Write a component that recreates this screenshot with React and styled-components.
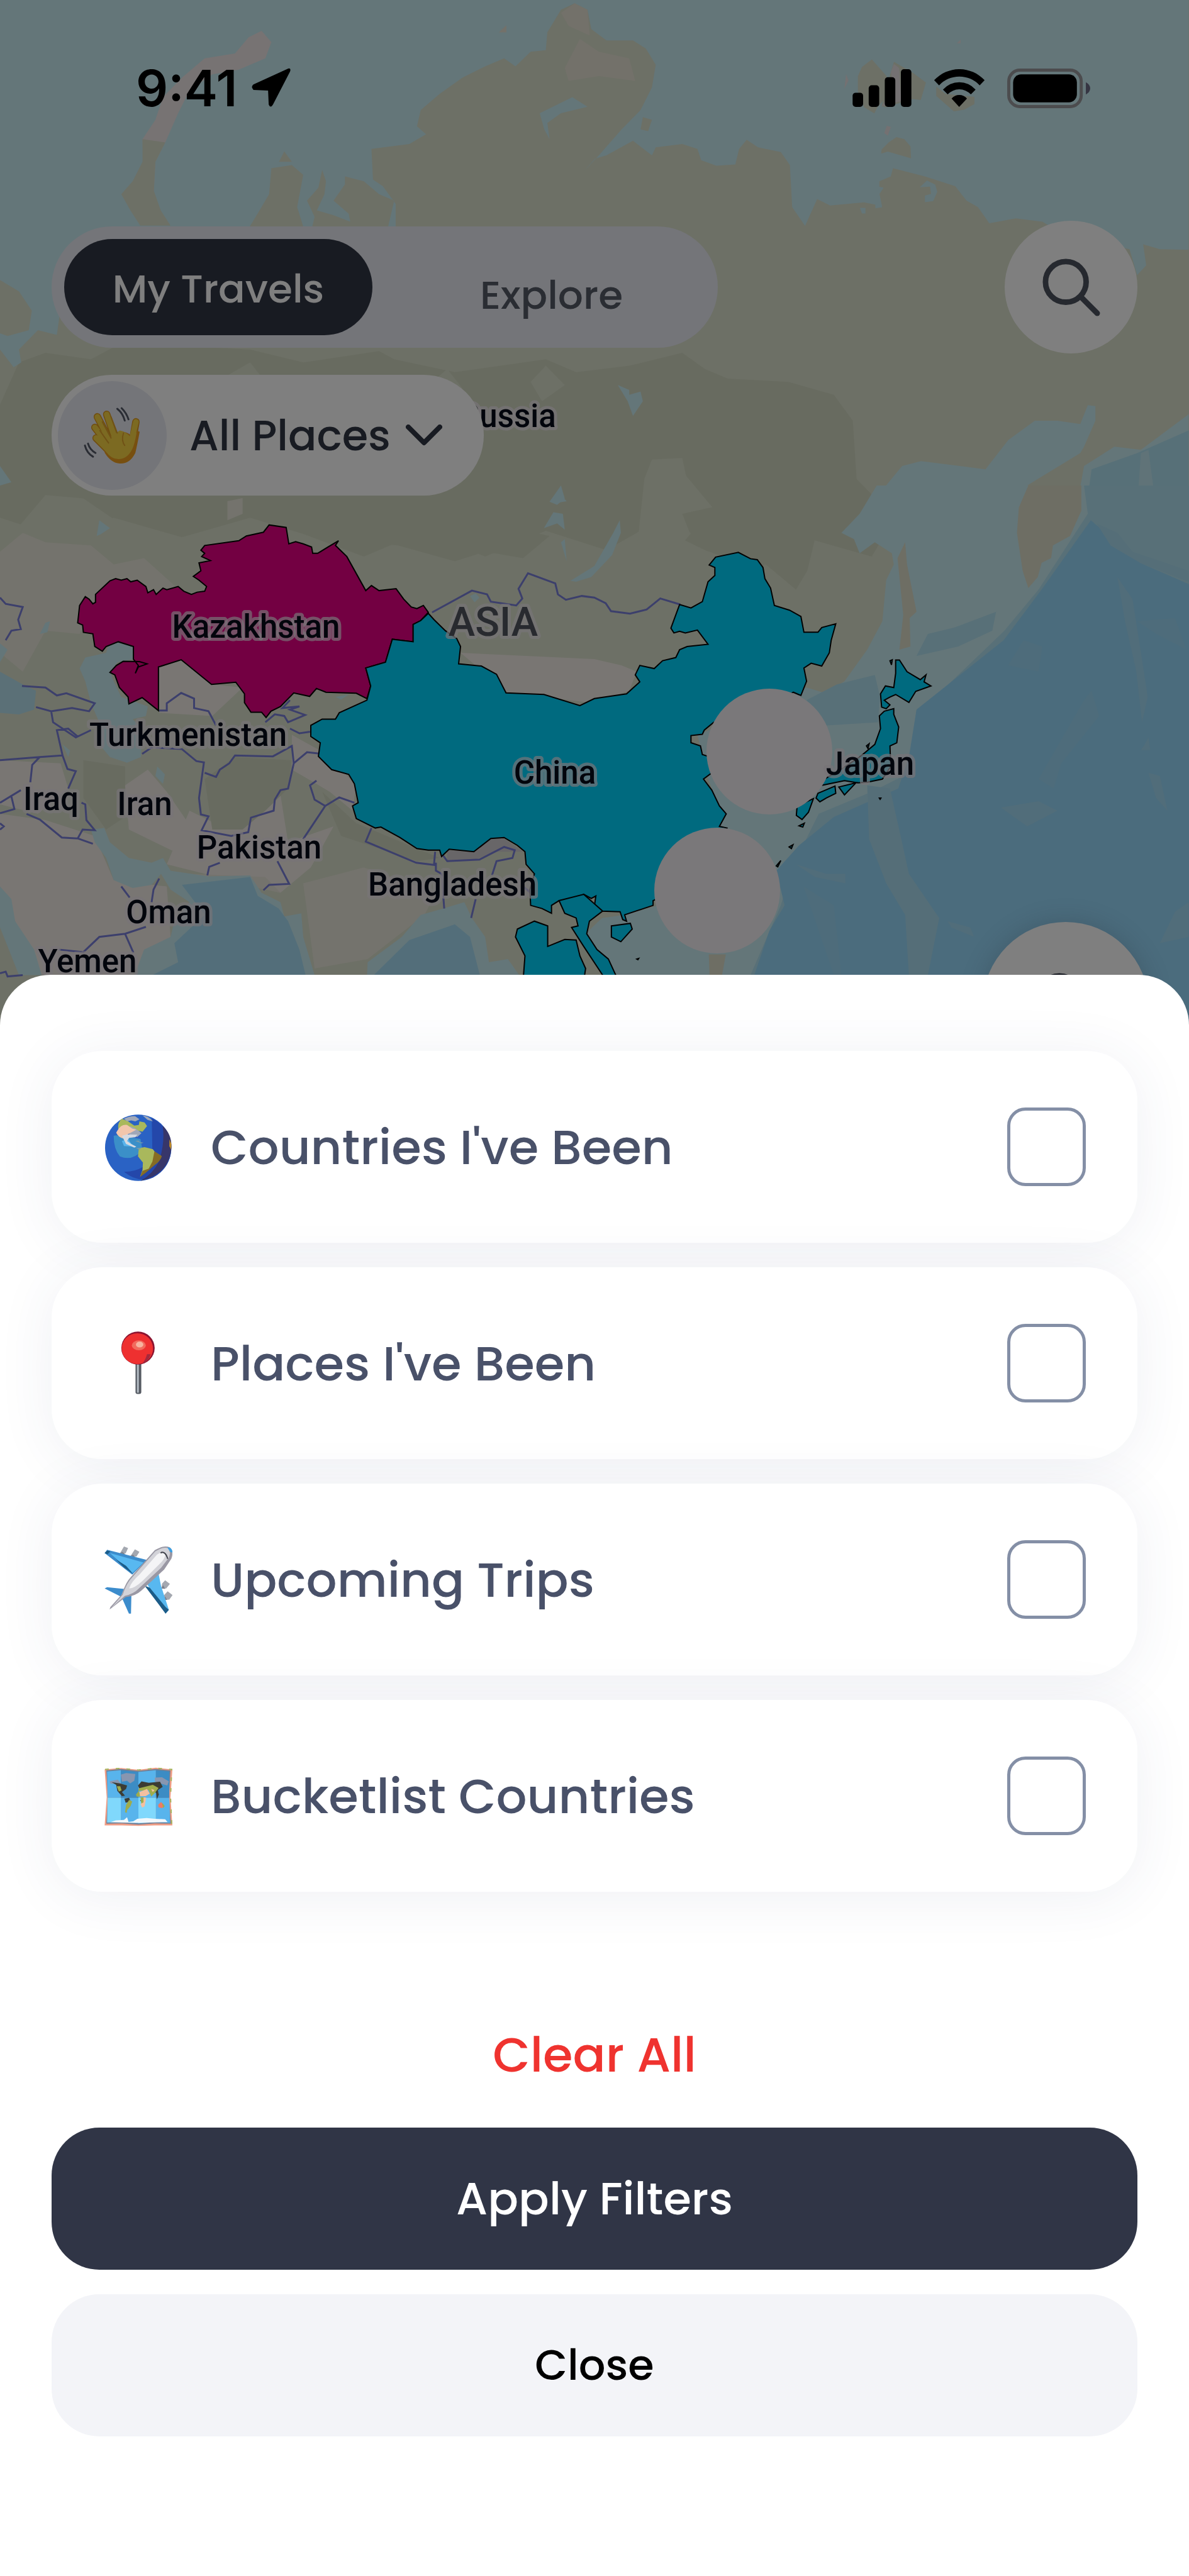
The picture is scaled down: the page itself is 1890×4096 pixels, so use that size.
import React, { useState } from 'react';
import styled, { createGlobalStyle } from 'styled-components';


const labels = [
    { text: 'Russia', x: 807, y: 679 },
    { text: 'Kazakhstan', x: 407, y: 1014 },
    { text: 'Turkmenistan', x: 299, y: 1186 },
    { text: 'Iraq', x: 81, y: 1288 },
    { text: 'Iran', x: 230, y: 1296 },
    { text: 'Pakistan', x: 412, y: 1365 },
    { text: 'Bangladesh', x: 719, y: 1424 },
    { text: 'Oman', x: 268, y: 1468 },
    { text: 'Yemen', x: 139, y: 1546 },
    { text: 'China', x: 882, y: 1246 },
    { text: 'Japan', x: 1383, y: 1232 },
];

const WorldMap = () => (
    <MapSvg viewBox="0 0 1890 1700" aria-hidden="true">
        <rect width="1890" height="1700" fill="#dae0cc"/>
        {/* arctic coast */}
        <g transform="scale(1.205 .5146)">
            <path fill="#d1d7c1" d="M0 1250L25 1120 60 1090 120 1110 160 1060 330 1080 400 1120 500 1085 520 1110 600 1150 660 1130 720 1110 760 1150 830 1130 900 1090 930 1140 960 1170 1040 1180 1100 1220 1125 1300 1130 1480 1180 1600 1150 1720 1060 1660 1000 1760 930 1700 860 1620 800 1700 720 1640 640 1720 560 1640 480 1720 400 1650 330 1600 240 1660 150 1600 80 1660 0 1600z"/>
            <path fill="#dae0cc" d="M840 1700L850 1480 860 1420 900 1415 905 1470 940 1568 900 1680zM20 1640L60 1530 110 1540 160 1620 90 1700zM300 1160L330 1120 350 1180 320 1250zM560 1200L590 1140 610 1200 580 1280zM700 1180L720 1130 745 1190 715 1240z"/>
            <path fill="#c8ecf2" d="M0 0L0 865 25 900 42 960 38 1020 10 1038 0 1030 0 1080 18 1135 28 1120 25 1080 50 1020 75 1035 80 950 200 900 300 800 330 698 345 640 355 600 358 520 385 510 400 540 392 640 400 700 412 700 415 670 405 620 420 580 425 525 430 560 428 600 418 650 440 665 462 685 460 660 440 620 455 570 455 545 480 560 500 600 520 620 512 700 522 700 522 630 505 575 492 555 490 460 540 445 562 415 550 390 555 340 580 290 610 240 640 205 665 180 680 205 700 160 720 155 722 100 740 30 758 10 775 30 780 90 800 125 835 125 852 150 865 200 860 270 845 340 820 400 790 480 770 530 785 490 800 480 835 435 860 480 865 455 900 445 920 460 925 495 945 512 970 508 975 460 985 432 1000 455 1030 470 1042 510 1045 640 1062 698 1078 615 1095 635 1140 625 1160 635 1160 560 1175 545 1178 520 1220 545 1260 575 1275 620 1290 640 1305 690 1340 675 1375 685 1400 720 1450 750 1490 770 1500 850 1512 820 1508 755 1530 770 1568 772 1568 0z"/>
            <path fill="#eee6e6" d="M345 95L358 130 350 180 315 215 280 230 250 280 235 350 218 440 205 500 203 590 190 575 188 430 205 370 215 300 240 240 270 180 310 165 328 115z"/>
            <path fill="#dae0cc" d="M188 430L218 440 205 500 203 590 212 650 225 697 185 697 172 650 160 600 175 560 188 500zM368 500L375 468 385 500zM845 400L848 362 860 370 855 405z"/>
            <path fill="#e6e2d4" d="M740 40L758 10 775 30 778 110 750 80zM745 210L765 120 790 160 830 180 838 250 790 235 750 250zM658 100L668 78 668 100z"/>
            <path fill="#c8ecf2" d="M712 350L755 300 775 330 740 350 722 380 725 430 718 400zM815 1190L830 1205 830 1220 845 1210 848 1240 835 1285 828 1240zM725 1550L740 1500 745 1540 735 1560zM0 1440L15 1490 0 1500z"/>
            <path fill="#c8ecf2" d="M1145 1568L1190 1440 1215 1425 1300 1450 1330 1360 1365 1300 1395 1300 1425 1310 1435 1252 1445 1255 1445 1300 1430 1380 1425 1400 1355 1500 1350 1570zM1420 1570L1430 1440 1470 1380 1505 1390 1568 1280 1568 1570z"/>
            <path fill="#aee0f0" d="M1433 1568L1440 1450 1500 1400 1568 1330 1568 1568z"/>
            <path fill="#c0e6f0" d="M1500 1568L1505 1400 1515 1390 1525 1568z"/>
        </g>
        <g transform="translate(1339 59) scale(.328)">
            <path fill="#dae0cc" d="M143 108L215 190 205 300 170 340 155 370 105 340 75 260 75 190 95 145zM250 120L345 175 405 220 380 305 340 300 210 340 190 335 235 170zM455 240L500 275 640 290 640 325 590 352 540 360 455 285zM262 485L300 495 330 530 333 588 220 555 188 565 190 545 225 510z"/>
            <path fill="#e8e2e4" d="M235 170L250 130 275 150 285 310 190 335 250 250zM215 430L235 435 220 478 203 465zM18 180L30 210 10 250zM555 30L573 12 573 30z"/>
            <path fill="#c8ecf2" d="M375 728L410 695 450 715 460 750 440 795 400 800 400 768 430 760 425 725zM160 720L200 730 180 760 193 825 160 830zM85 828L112 828 112 855 95 855z"/>
        </g>
        {/* everything south of siberia */}
        <g transform="translate(0 787) scale(.6025 .502)">
            <path fill="#f2ece6" d="M0 1010L120 1030 250 1080 300 1220 440 1240 450 1400 340 1521 110 1521 40 1350 0 1240zM420 545L478 525 560 600 640 610 560 700 420 690zM330 920L390 870 440 940 520 1080 460 1130 340 1060zM500 1000L600 1060 740 950 760 1100 880 1050 820 1180 740 1260 440 1170zM770 760L860 820 940 920 930 1000 870 940 770 870zM1215 500L1568 520 1640 540 1680 560 1660 620 1568 660 1340 625zM0 840L160 850 180 930 100 1010 0 980z"/>
            <path fill="#e9e6da" d="M0 180L60 120 120 150 240 160 300 220 380 200 500 330 380 300 250 330 210 440 120 430 60 560 0 500zM800 1230L960 1180 1150 1260 1120 1330 970 1470 830 1500zM600 20L640 10 640 60 600 80zM500 1200L740 1260 700 1210z"/>
            <path fill="#d1d7c1" d="M540 900L620 830 770 840 760 930 700 1000 640 1060 560 1060zM220 840L330 860 330 1020 280 1060 220 960zM900 60L1000 110 1100 90 1180 130 1300 90 1450 130 1380 200 1280 180 1200 210 1050 160 950 150zM1800 60L1950 20 2060 60 2150 140 2130 240 2100 300 1980 180 1820 120zM850 940L940 1040 1160 1150 1100 1160 900 1080z"/>
            <path fill="#d0ccd0" d="M1180 1125L1250 1130 1295 1090 1330 1088 1380 1130 1310 1130 1240 1160 1180 1160z"/>
            <path fill="#c8ecf2" d="M2313 -30L2268 60 2220 120 2253 140 2268 185 2308 150 2353 185 2358 220 2338 270 2328 400 2288 490 2228 590 2178 628 2128 610 1960 700 1840 760 1868 900 1908 1020 1768 1290 1648 1330 1588 1340 1545 1390 1568 1430 1628 1521 1628 1700 3150 1700 3150 -30z"/>
            <path fill="#c8ecf2" d="M285 480L315 465 350 475 352 520 310 530 290 560 300 590 320 640 345 650 390 670 385 700 350 710 375 740 372 830 335 848 290 830 255 780 262 720 240 660 225 590 210 550 225 515 280 500z"/>
            <path fill="#b6e0ee" d="M0 560L60 600 95 620 90 680 50 695 0 690z"/>
            <path fill="#c8ecf2" d="M0 470L20 490 0 530zM105 440L120 405 132 400 125 435zM255 130L262 80 290 105 265 125zM410 890L415 860 435 885 430 915zM1240 320L1255 312 1265 325 1252 340zM1450 20L1480 0 1495 20 1470 25zM1435 105L1460 55 1485 60 1490 110 1470 90zM1480 150L1490 140 1495 210zM1505 272L1568 225 1618 120 1635 80 1638 120 1615 190 1560 260 1520 275zM885 640L920 632 900 648zM165 790L185 810 180 830z"/>
            <path fill="#c8ecf2" d="M240 1060L275 1055 290 1100 340 1150 400 1165 430 1150 450 1190 550 1208 660 1205 690 1260 740 1290 750 1335 795 1325 800 1400 830 1521 830 1700 300 1700 380 1440 450 1400 460 1350 500 1290 450 1250 425 1200 400 1235 350 1245 300 1220 280 1150 250 1100zM0 1240L30 1280 40 1350 90 1440 110 1521 50 1521 20 1430 0 1370zM1225 1290L1245 1340 1280 1400 1290 1480 1340 1470 1370 1521 1370 1600 965 1600 970 1480 1060 1400 1110 1330 1170 1310z"/>
            <path fill="#a6dcf4" d="M480 1235L660 1210 680 1270 735 1310 760 1350 790 1440 810 1540 370 1540 470 1480 460 1420 540 1330zM1200 1360L1240 1400 1270 1540 970 1540 1080 1410z"/>
            {/* pacific */}
            <path fill="#b0e0f0" d="M2860 -30L2870 60 2740 300 2650 430 2450 660 2400 880 2300 940 2160 1010 2090 1180 2060 1300 1980 1521 1980 1700 3150 1700 3150 -30zM2128 650L2208 600 2308 570 2322 640 2316 720 2180 730zM2448 440L2518 420 2628 370 2618 430 2528 480 2418 510z"/>
            <path fill="#96d8fa" d="M2878 80L2748 300 2648 460 2418 680 2398 830 2370 930 2200 1020 2108 1110 2048 1190 2070 1300 2030 1380 1990 1521 1990 1700 3150 1700 3150 290 3008 215z"/>
            <path fill="#aaddf0" d="M2288 920L2348 930 2378 1090 2398 1200 2478 1340 2448 1521 2398 1521 2388 1330 2338 1230 2293 1090zM2893 90L2948 120 2988 180 3136 240 3136 275 3008 215 2930 160z"/>
            <path fill="#a2daf4" d="M2948 260L2988 330 3018 560 3028 640 3013 720 2998 560 2968 400zM2100 1170L2180 1200 2230 1200 2230 1230 2150 1210zM2640 990L2740 970 2790 1000 2710 1050zM3030 880L3060 890 3080 1000 3050 960zM3020 790L3030 768 3035 808 3010 808zM3100 1320L3136 1290 3136 1400 3060 1420zM2500 1350L2560 1370 2570 1400 2510 1370z"/>
            <path fill="#9cd9f6" d="M2660 540L2700 460 2750 480 2740 560zM2860 650L2880 620 2900 700 2800 850 2780 930 2740 900zM3000 400L3100 390 3130 490 3050 440zM2120 1240L2200 1300 2220 1521 2200 1521z"/>
            <path fill="#dcdcc8" d="M2713 -30L2853 -30 2853 50 2823 130 2778 160 2773 200 2748 215 2738 260 2713 295 2698 240 2683 120 2688 40zM2388 150L2393 220 2418 370 2400 390 2402 480 2373 490 2383 380 2368 200zM1870 1455L1915 1455 1905 1521 1872 1521z"/>
            <Borders>
                <path d="M0 325L15 345 60 355 48 395 55 425 30 430 15 460M58 605L120 610 150 635 175 628 250 660 235 685 190 675 135 685 95 672M135 685L140 720 200 768 240 745M0 840L105 830 165 825 150 745 180 740 205 765M105 830L85 855 80 910M165 825L178 868 200 875 180 930M0 975L55 935M30 955L38 995 0 1008M70 1010L105 1028 163 1085 205 1088 218 1060 250 1062 228 1030 225 980 215 975M205 1088L245 1105M0 1040L10 1050 0 1060M155 1440L220 1448 262 1400 330 1390 385 1368M330 1390L352 1450M320 1240L342 1275M400 1290L405 1250 420 1215M0 1515L15 1510 20 1525 60 1521M420 683L440 683 440 660 478 627 512 645 512 675 550 685 570 730M375 820L400 800 480 805 518 843 538 847 525 960 530 1012 550 1018 532 1062 610 1080 655 1068 662 1022 722 1000 725 965 740 935 760 930 775 850 770 795 720 828 620 825 605 850 580 870 570 893 540 880M775 850L810 815 850 820M580 1165L552 1178 547 1205M732 1160L763 1232 710 1235 695 1252M800 1090L858 985 830 965 818 920 835 905M858 985L895 958 935 975M700 720L725 695 750 700 760 720 805 697 765 680 790 670 745 675 765 650M765 740L790 755 818 750M980 1055L965 1098 1098 1165 1145 1172 1148 1130M1168 1140L1180 1160 1265 1155 1330 1115 1358 1125 1352 1150 1310 1160 1298 1205M1150 1165L1150 1190 1165 1200 1172 1310M1255 1280L1243 1340M1400 1260L1380 1240M1140 372L1245 303 1285 315 1295 338 1362 350 1378 328 1368 297 1393 248 1465 280 1472 315 1493 332 1535 320 1568 325 1598 343 1612 368 1662 376 1706 363 1742 328 1795 347"/>
            </Borders>
            <Country $fill="#e60084" d="M210 350L225 322 235 330 245 345 252 340 252 315 290 272 305 265 320 270 335 265 345 275 362 270 385 290 390 310 405 300 412 315 430 295 440 300 470 290 485 305 505 315 520 308 540 305 545 290 525 270 510 258 530 240 525 215 555 208 532 195 540 185 530 175 540 160 630 145 650 130 695 118 710 95 755 103 762 155 780 148 800 155 822 165 825 185 838 185 865 165 893 145 885 160 915 195 965 303 980 287 1000 303 1045 297 1065 330 1085 355 1100 360 1117 350 1130 372 1110 398 1090 410 1090 465 1035 457 1017 530 965 548 978 605 968 645 940 628 860 625 835 613 817 638 775 627 740 670 715 685 702 705 690 688 662 688 645 658 645 630 622 593 558 600 478 522 418 545 418 683 375 642 340 662 338 640 315 610 303 570 290 562 307 540 325 527 368 528 388 535 365 545 357 565 365 540 352 520 352 480 312 465 280 480 270 495 250 480 245 440 220 435 218 412 205 405z"/>
            <Country $fill="#00d4ff" d="M1130 375L1145 395 1175 430 1205 455 1215 480 1210 535 1270 542 1310 568 1335 627 1435 632 1530 667 1568 645 1653 630 1688 592 1676 570 1688 540 1726 550 1748 525 1783 515 1793 490 1813 480 1868 473 1840 428 1808 437 1793 432 1778 437 1770 422 1793 347 1823 358 1853 338 1868 275 1886 255 1886 230 1871 222 1888 197 1948 182 1980 202 1998 205 2013 230 2018 265 2033 295 2043 350 2083 365 2113 385 2121 435 2158 435 2168 420 2205 408 2193 460 2188 500 2168 542 2140 533 2121 548 2128 590 2113 635 2093 625 2048 660 1968 720 1883 720 1858 745 1853 758 1823 762 1823 785 1848 795 1853 822 1868 828 1878 880 1856 900 1878 935 1898 985 1916 1010 1898 1050 1918 1055 1878 1150 1768 1260 1723 1285 1723 1300 1648 1330 1653 1350 1643 1345 1636 1320 1588 1318 1568 1305 1572 1270 1560 1278 1540 1265 1520 1280 1475 1285 1455 1300 1455 1325 1430 1310 1400 1300 1398 1250 1410 1200 1388 1170 1385 1130 1365 1110 1330 1085 1295 1088 1250 1130 1185 1122 1165 1145 1160 1125 1130 1125 1100 1120 1055 1085 1005 1052 990 1055 940 1025 930 985 945 975 935 915 920 885 875 870 840 828 845 785 820 765 820 730 850 710 885 710 895 690 968 650 978 605 965 548 1017 530 1035 457 1090 465 1090 410 1110 398z"/>
            <Country $fill="#00d4ff" d="M1475 1285L1540 1265 1590 1318 1555 1350 1548 1390 1575 1440 1605 1470 1628 1530 1595 1530 1540 1430 1508 1370 1525 1365 1520 1340 1490 1325zM1365 1375L1410 1350 1445 1365 1445 1430 1490 1408 1520 1410 1530 1460 1545 1500 1540 1540 1380 1540 1385 1460 1360 1400zM1613 1365L1663 1357 1668 1375 1638 1415 1613 1400z"/>
            <Country $fill="#00d4ff" d="M2363 523L2373 523 2393 560 2428 585 2443 570 2438 592 2456 605 2416 622 2398 657 2363 632 2348 640 2333 650 2348 665 2338 677 2326 672 2323 630 2336 605 2358 610 2363 565zM2333 685L2358 677 2358 695 2371 735 2366 785 2348 795 2350 860 2328 900 2288 910 2263 912 2228 905 2188 915 2168 920 2168 905 2218 870 2268 830 2308 790 2323 740 2320 700zM2213 925L2258 912 2228 950zM2158 945L2203 922 2205 945 2180 960 2163 972 2153 960zM2103 985L2146 962 2133 1005 2116 1028 2101 1015zM2286 795L2293 788 2290 803zM2108 1048L2122 1040 2118 1052zM2082 1115L2092 1108 2088 1120zM2048 1175L2060 1158 2052 1178zM2320 960L2324 960 2322 964zM1680 1470L1685 1468 1683 1472zM2348 525L2354 522 2352 538z"/>
        </g>
        <circle cx="1223" cy="1195" r="100" fill="#f4f0f4"/>
        <circle cx="1140" cy="1416" r="100" fill="#f4f0f4"/>
        {labels.map(({text, x, y}) => (
            <Place key={text} x={x} y={y}>{text}</Place>
        ))}
        <Continent x="784" y="1011">ASIA</Continent>
    </MapSvg>
);

const StatusBar = () => (
    <Status>
        <Clock>
            <Time>9:41</Time>
            <svg width="64" height="64" viewBox="0 0 66 66" aria-hidden="true">
                <path d="M61 1L4 27Q-1 31 4 36L28 37 29 60Q32 67 36 60L64 6Q66 0 61 1z"/>
            </svg>
        </Clock>
        <Indicators aria-hidden="true">
            <svg width="94" height="60" viewBox="0 0 95 61">
                <rect y="38" width="17" height="23" rx="5"/>
                <rect x="26" y="26" width="17" height="35" rx="5"/>
                <rect x="52" y="13" width="17" height="48" rx="5"/>
                <rect x="78" width="17" height="61" rx="5"/>
            </svg>
            <svg width="82" height="60" viewBox="445 155 248 184">
                <path d="M446 209A167 167 0 0 1 692 209L668 234A135 135 0 0 0 470 234zM489 255A105 105 0 0 1 648 255L625 278A77 77 0 0 0 512 278zM531 298A49 49 0 0 1 606 298L568 339z"/>
            </svg>
            <svg width="132" height="63" viewBox="0 0 134 64">
                <rect x="2.5" y="2.5" width="117" height="59" rx="18" fill="none" stroke="#98989c" strokeWidth="5"/>
                <rect x="9.5" y="9.5" width="103" height="45" rx="13"/>
                <path d="M127 22Q134 26 134 32T127 42z" fill="#6a6a84"/>
            </svg>
        </Indicators>
    </Status>
);

const WaveIcon = () => (
    <svg width="91" height="91" viewBox="0 0 92 92" fill="none" strokeLinecap="round" strokeLinejoin="round" aria-hidden="true">
        <path stroke="#e09a20" strokeWidth="12" d="M37 12L52 55M22 16L45 60M18 33L42 64M20 50L42 72M84 24L78 58"/>
        <path fill="#ee9f20" d="M30 58L60 40Q70 40 76 46L80 36 90 40Q86 62 83 74 74 92 58 91 44 90 34 74z"/>
        <path stroke="#f8d444" strokeWidth="9" d="M37 12L52 55M22 16L45 60M18 33L42 64M20 50L42 72M84 24L77 54"/>
        <path fill="#f8d444" d="M32 56L58 38Q68 40 75 48L80 40 85 42Q82 60 78 68 70 84 56 84 44 84 36 72z"/>
        <path stroke="#e0a52c" strokeWidth="2" d="M30 24L44 50M26 38L40 58M44 16L54 42M64 42Q60 54 66 62"/>
        <path stroke="#555a68" strokeWidth="3" d="M54 3Q63 10 66 22M61 2Q69 10 72 20M2 62Q5 74 15 80M7 59Q10 69 19 74"/>
    </svg>
);

const Globe = () => (
    <Emoji viewBox="55 55 330 330">
        <circle cx="219" cy="223" r="161" fill="#2a62c4"/>
        <path fill="#2447aa" d="M285 78Q380 130 380 223 378 320 290 368 220 396 150 340 260 340 288 250z"/>
        <path fill="#37366a" d="M338 116Q384 160 380 223 370 350 230 384 290 350 320 290 350 200 338 116z"/>
        <path fill="#3b8fc8" d="M100 165Q110 160 130 165L230 180 240 235Q190 290 130 265 100 230 100 165z"/>
        <path fill="#59b4ec" d="M140 190L170 180 195 218 150 215z"/>
        <path fill="#a9b85c" d="M122 132Q118 100 140 82L170 95 200 115 222 112 225 95 250 100 262 118 240 145 215 140 190 130 160 115z"/>
        <path fill="#a0a8b8" d="M150 82Q180 68 205 70L225 85 205 95 185 90 165 95zM240 66Q275 72 290 95L265 88zM178 118L205 128 235 152 215 170 175 165z"/>
        <path fill="#f2c6ac" d="M118 140Q135 108 165 112L190 130 210 135 165 160 145 178Q122 172 112 150z"/>
        <path fill="#d5dae2" d="M140 165L165 158 215 160 205 172 175 175 165 190 185 205 210 218 200 222 160 205z"/>
        <path fill="#a9b85c" d="M222 225L250 220 290 230 302 245 330 262Q322 290 290 310L245 345 228 365 240 330 242 295 218 265z"/>
        <path fill="#866c24" d="M298 240L334 264Q325 290 298 308L255 345 228 365 240 335 270 325 288 290z"/>
        <path fill="#7c9aa8" d="M205 190L220 188 228 196 245 198 235 202zM208 225L235 222 225 232z"/>
        <path fill="#c08a24" d="M371 182L380 205 379 232 370 215z"/>
    </Emoji>
);

const Pin = () => (
    <Emoji viewBox="55 55 330 330">
        <rect x="206" y="210" width="28" height="158" rx="10" fill="#555a62"/>
        <rect x="213" y="216" width="9" height="146" fill="#b4bcc4"/>
        <ellipse cx="218" cy="145" rx="81" ry="80" fill="#8c1430"/>
        <ellipse cx="215" cy="148" rx="76" ry="75" fill="#ee3030"/>
        <path fill="#a4283c" d="M280 175Q270 210 238 222 256 200 262 175z"/>
        <ellipse cx="222" cy="132" rx="34" ry="24" fill="#f26a5c"/>
        <ellipse cx="226" cy="128" rx="18" ry="14" fill="#f8b4a0"/>
    </Emoji>
);

const Plane = () => (
    <Emoji viewBox="55 55 330 330">
        <g fill="#a4a8b0">
            <path d="M150 58L170 66 158 92 130 92zM203 72L225 84 210 108 182 104zM350 222L373 240 355 262 332 262 335 238zM362 276L386 294 370 316 345 318 345 294z"/>
        </g>
        <g fill="#7c808c">
            <path d="M130 92L142 84 158 98zM182 104L194 98 206 112zM332 262L340 246 350 264zM345 318L350 300 360 318z"/>
        </g>
        <path fill="#3c8ccc" d="M56 90L68 74 262 124 190 195zM56 262L68 256 150 264 135 302zM140 308L186 290 184 384 174 384z"/>
        <path fill="#58b8f0" d="M82 90L245 136 190 188zM262 240L318 190 330 250 368 366 352 384z"/>
        <path fill="#1c5c88" d="M56 90L68 78 84 82 70 96zM110 120L160 152 195 192 150 160zM250 248L275 258 352 352 368 366 352 384z"/>
        <path fill="#9a98a4" d="M80 364L84 352 140 290Q158 232 185 205L300 76Q340 50 372 62 394 80 380 118L345 170 235 272Q205 300 158 304z"/>
        <path fill="#d2d2d8" d="M88 356L144 292Q162 236 190 208L302 82Q338 58 364 66 380 84 368 112L330 162 222 262Q198 288 154 298z"/>
        <path fill="#f4f4f6" d="M225 195L310 98Q335 80 350 96 352 116 320 146L240 225Q200 262 175 262 185 230 225 195z"/>
        <path fill="#3ca0e4" d="M360 62Q384 62 386 88L374 84z"/>
        <path fill="none" stroke="#3c3e48" strokeWidth="6" d="M328 90Q334 84 344 88 356 94 362 118"/>
    </Emoji>
);

const FoldedMap = () => (
    <Emoji viewBox="55 55 330 330">
        <path fill="#ee9c84" d="M56 90L135 83 220 92 305 82 385 90 376 225 385 362 300 362 220 364 140 362 56 362 66 225z"/>
        <path fill="none" stroke="#a4b45c" strokeWidth="6" strokeDasharray="18 34" d="M58 90L135 85 220 93 305 84 382 90 376 225 382 360"/>
        <path fill="#6e8098" d="M64 95L135 88 220 97 305 88 376 95 368 225 378 354 300 352 220 358 140 352 64 354 72 225z"/>
        <path fill="#58b4ec" d="M68 100L135 94 135 228 70 228zM220 102L305 94 305 228 220 228zM135 228L220 228 220 352 135 346zM305 228L370 228 374 350 305 346z"/>
        <path fill="#3c8cc4" d="M135 94L220 102 220 228 135 228zM305 94L370 100 370 228 305 228z"/>
        <path fill="#80d8fc" d="M70 228L135 228 135 346 68 348zM220 228L305 228 305 346 220 352z"/>
        <path fill="#8896b0" d="M135 115L160 108 205 112 200 145 180 158 165 145 140 150zM80 148L120 140 135 160 85 160zM300 130L335 128 368 148 360 168 300 150z"/>
        <path fill="#3c3c34" d="M90 152L130 158 165 168 160 185 140 200 155 218 140 220 118 195 112 165zM152 232L175 228 182 246 158 252zM218 168L235 148 270 155 325 150 338 175 315 190 318 212 300 200 260 180 225 185zM305 195L320 210 310 235zM228 240L240 238 240 255z"/>
        <path fill="#a0ac4c" d="M115 172L132 172 138 192 125 198zM160 262L175 238 190 246 182 268 165 288 163 302 155 298zM222 182L290 165 318 180 300 205 282 222 270 190 220 195zM208 212L222 195 230 222 212 222zM230 225L250 225 245 262 235 262z"/>
        <path fill="#f4c0a0" d="M225 200L262 185 275 208 255 220 228 220zM245 225L258 228 250 270 238 276 230 258 245 250zM282 185L298 190 290 200z"/>
        <path fill="#f07a64" d="M316 262L330 248 346 268 334 278 318 274z"/>
        <path fill="#a0ac4c" d="M335 252L348 268 340 278z"/>
        <path fill="#f2f8fc" d="M85 346L110 338 150 335 165 322 172 345 195 342 215 330 260 326 300 330 350 332 362 346 220 350 140 348z"/>
    </Emoji>
);

const filters = [
    { id: 'countries', text: "Countries I've Been", icon: <Globe/> },
    { id: 'places', text: "Places I've Been", icon: <Pin/> },
    { id: 'trips', text: 'Upcoming Trips', icon: <Plane/> },
    { id: 'bucketlist', text: 'Bucketlist Countries', icon: <FoldedMap/> },
];

const App = () => {
    const [tab, setTab] = useState('travels');
    const [checked, setChecked] = useState([]);

    const toggle = (id) => setChecked((prev) =>
        prev.includes(id) ? prev.filter((item) => item !== id) : [...prev, id]
    );

    return (
        <Screen>
            <GlobalStyle/>
            <WorldMap/>
            <Top>
                <StatusBar/>
                <Toolbar>
                    <Tabs>
                        <Tab $active={tab === 'travels'} onClick={() => setTab('travels')}>My Travels</Tab>
                        <Tab $active={tab === 'explore'} onClick={() => setTab('explore')}>Explore</Tab>
                    </Tabs>
                    <SearchButton aria-label="Search">
                        <svg width="92" height="92" viewBox="0 0 94 94" fill="none" stroke="#4c525e" strokeWidth="9" strokeLinecap="round">
                            <circle cx="38" cy="38" r="33"/>
                            <path d="M62 62L89 89"/>
                        </svg>
                    </SearchButton>
                </Toolbar>
                <PlacePicker>
                    <Avatar><WaveIcon/></Avatar>
                    <PlaceSelect aria-label="Places">
                        <option>All Places</option>
                    </PlaceSelect>
                    <svg width="58" height="34" viewBox="0 0 58 34" fill="none" stroke="#303644" strokeWidth="8" strokeLinecap="round" strokeLinejoin="round" aria-hidden="true">
                        <path d="M4 4L29 29 54 4"/>
                    </svg>
                </PlacePicker>
                <Locate aria-label="My location">
                    <svg width="100" height="100" viewBox="0 0 100 100" fill="none" stroke="#303644" strokeWidth="9">
                        <circle cx="40" cy="42" r="35"/>
                    </svg>
                </Locate>
                <Dim/>
            </Top>
            <Sheet>
                <List>
                    {filters.map(({id, text, icon}) => (
                        <Card key={id} htmlFor={id}>
                            {icon}
                            <CardText>{text}</CardText>
                            <Check type="checkbox" id={id}
                            checked={checked.includes(id)} onChange={() => toggle(id)}/>
                        </Card>
                    ))}
                </List>
                <ClearButton onClick={() => setChecked([])}>Clear All</ClearButton>
                <Actions>
                    <ApplyButton>Apply Filters</ApplyButton>
                    <CloseButton>Close</CloseButton>
                </Actions>
            </Sheet>
        </Screen>
    );
}

const GlobalStyle = createGlobalStyle`
    *{
        box-sizing: border-box;
    }
    body{
        margin: 0;
        font-family: Poppins, Inter, sans-serif;
        background: #fff;
    }
    button, select{
        font-family: inherit;
        border: none;
        padding: 0;
        cursor: pointer;
    }
`;

const Screen = styled.div`
    position: relative;
    display: flex;
    flex-direction: column;
    min-height: 100vh;
    overflow: hidden;
`;

const MapSvg = styled.svg`
    position: absolute;
    top: 0;
    left: 0;
    width: 100%;
`;

const Borders = styled.g`
    fill: none;
    stroke: #787ed8;
    stroke-width: 3px;
    path{
        vector-effect: non-scaling-stroke;
    }
`;

const Country = styled.path`
    fill: ${({$fill}) => $fill};
    stroke: #000;
    stroke-width: 2px;
    vector-effect: non-scaling-stroke;
`;

const Place = styled.text`
    font: 500 51px Roboto, sans-serif;
    text-anchor: middle;
    fill: #040a18;
    stroke: rgba(240, 232, 240, 0.7);
    stroke-width: 10px;
    stroke-linejoin: round;
    paint-order: stroke;
`;

const Continent = styled(Place)`
    font-size: 64px;
    fill: #50545e;
`;

const Top = styled.header`
    position: relative;
    flex: 1;
    display: flex;
    flex-direction: column;
    gap: 34px;
    padding: 100px 82px 0;
`;

const Dim = styled.div`
    position: absolute;
    inset: 0 0 -100px;
    background: rgba(0, 0, 0, 0.5);
`;

const Status = styled.div`
    display: flex;
    justify-content: space-between;
    align-items: center;
    height: 80px;
    margin-bottom: 137px;
    padding: 0 75px 0 134px;
`;

const Clock = styled.div`
    display: flex;
    align-items: center;
    gap: 22px;
`;

const Time = styled.span`
    font-family: Inter, sans-serif;
    font-size: 80px;
    line-height: 80px;
    font-weight: 600;
`;

const Indicators = styled.div`
    display: flex;
    align-items: center;
    gap: 35px;
`;

const Toolbar = styled.div`
    display: flex;
    justify-content: space-between;
    align-items: center;
`;

const Tabs = styled.div`
    display: flex;
    gap: 20px;
    width: 1059px;
    height: 193px;
    border-radius: 96px;
    background: #e8eaf2;
`;

const Tab = styled.button`
    flex: ${({$active}) => $active ? '0 0 490px' : 1};
    margin: ${({$active}) => $active ? '20px 0 20px 20px' : '20px 0 0'};
    padding-top: 5px;
    border-radius: 78px;
    background: ${({$active}) => $active ? '#303644' : 'transparent'};
    color: ${({$active}) => $active ? '#fff' : '#555a66'};
    font-size: 63px;
    font-weight: 500;
`;

const SearchButton = styled.button`
    display: flex;
    justify-content: center;
    align-items: center;
    width: 211px;
    height: 211px;
    border-radius: 50%;
    background: #fff;
`;

const PlacePicker = styled.label`
    display: flex;
    align-items: center;
    align-self: flex-start;
    height: 192px;
    padding: 0 66px 0 10px;
    border-radius: 96px;
    background: #fff;
`;

const Avatar = styled.span`
    display: flex;
    justify-content: center;
    align-items: center;
    width: 173px;
    height: 173px;
    margin-right: 36px;
    border-radius: 50%;
    background: #e8eaf2;
`;

const PlaceSelect = styled.select`
    appearance: none;
    margin-right: 24px;
    background: none;
    color: #303644;
    font-size: 67px;
    font-weight: 500;
`;

const Locate = styled.button`
    position: absolute;
    right: 64px;
    bottom: -180px;
    width: 264px;
    height: 264px;
    border-radius: 50%;
    background: #fff;
    box-shadow: 0 0 40px rgba(48, 54, 68, 0.2);
`;

const Sheet = styled.section`
    position: relative;
    display: flex;
    flex-direction: column;
    padding: 121px 82px 222px;
    border-radius: 80px 80px 0 0;
    background: #fff;
`;

const List = styled.div`
    display: flex;
    flex-direction: column;
    gap: 39px;
`;

const Card = styled.label`
    display: flex;
    align-items: center;
    gap: 61px;
    height: 305px;
    padding: 0 82px 0 84px;
    border-radius: 80px;
    background: #fff;
    box-shadow: 0 8px 90px rgba(48, 60, 110, 0.08);
    cursor: pointer;
`;

const Emoji = styled.svg`
    flex: none;
    width: 108px;
    height: 108px;
`;

const CardText = styled.span`
    flex: 1;
    color: #495169;
    font-size: 77px;
    font-weight: 500;
`;

const Check = styled.input`
    appearance: none;
    width: 125px;
    height: 125px;
    margin: 0;
    border: 5px solid #848fa6;
    border-radius: 29px;
    background: #fff;
    &:checked{
        background: #303546;
    }
`;

const ClearButton = styled.button`
    align-self: center;
    margin: 205px 0 62px;
    background: none;
    color: #ef332f;
    font-size: 77px;
    line-height: 108px;
    font-weight: 500;
`;

const Actions = styled.div`
    display: flex;
    flex-direction: column;
    gap: 39px;
`;

const ApplyButton = styled.button`
    height: 226px;
    border-radius: 76px;
    background: #303546;
    color: #fff;
    font-size: 72px;
    font-weight: 500;
`;

const CloseButton = styled(ApplyButton)`
    background: #f3f4f8;
    color: #000;
    font-size: 67px;
`;

export default App;
